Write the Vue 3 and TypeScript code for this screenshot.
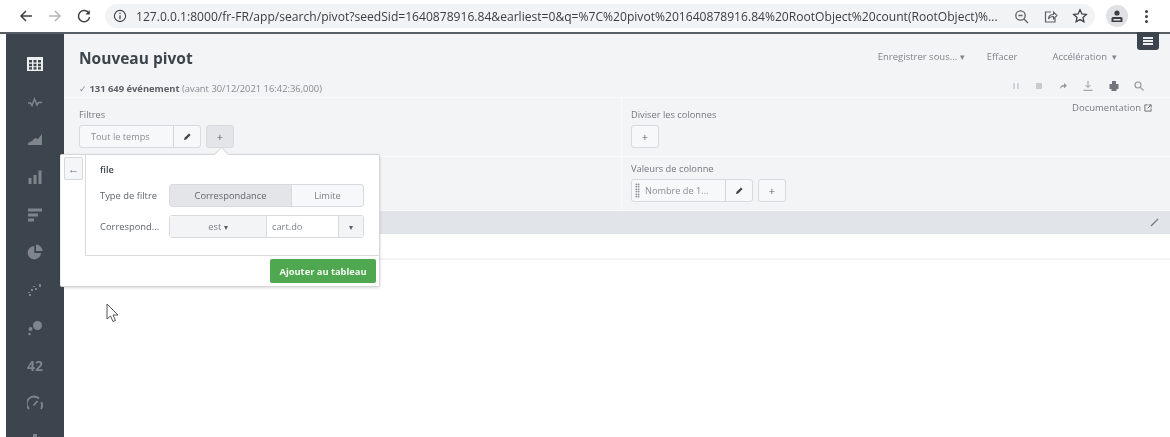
<template>
  <div class="page">
    <header class="browser">
      <svg class="nav" width="16" height="16" viewBox="0 0 16 16"><path d="M14 8H3M8 3L3 8l5 5" fill="none" stroke="#3c4043" stroke-width="1.5"/></svg>
      <svg class="nav" width="16" height="16" viewBox="0 0 16 16"><path d="M2 8h11M8 3l5 5-5 5" fill="none" stroke="#b4b7ba" stroke-width="1.5"/></svg>
      <svg class="nav" width="16" height="16" viewBox="0 0 16 16"><path d="M13 5.5A5.6 5.6 0 1 0 13.6 9" fill="none" stroke="#3c4043" stroke-width="1.5"/><path d="M13.8 2v4.4H9.4z" fill="#3c4043"/></svg>
      <div class="omnibox">
        <svg class="info" width="14" height="14" viewBox="0 0 14 14"><circle cx="7" cy="7" r="5.6" fill="none" stroke="#3c4043" stroke-width="1.1"/><path d="M7 6.2v4M7 3.8v1.2" stroke="#3c4043" stroke-width="1.2"/></svg>
        <span class="url">127.0.0.1:8000/fr-FR/app/search/pivot?seedSid=1640878916.84&amp;earliest=0&amp;q=%7C%20pivot%201640878916.84%20RootObject%20count(RootObject)%...</span>
        <svg class="omni-icon" width="15" height="15" viewBox="0 0 15 15"><circle cx="6.5" cy="6.5" r="4.7" fill="none" stroke="#5f6368" stroke-width="1.3"/><path d="M10 10l4 4M4.5 6.5h4" stroke="#5f6368" stroke-width="1.3"/></svg>
        <svg class="omni-icon" width="15" height="15" viewBox="0 0 15 15"><path d="M8 3H2.5v10h9.5V9" fill="none" stroke="#5f6368" stroke-width="1.2"/><path d="M5.5 10c0-3.500 2.500-4.500 5-4.500V3L14 6.500 10.500 10V7.500c-2 0-4 .5-5 2.500z" fill="none" stroke="#5f6368" stroke-width="1.1"/></svg>
        <svg class="omni-icon" width="16" height="16" viewBox="0 0 16 16"><path d="M8 1.800l1.900 4.100 4.400.5-3.300 3 .9 4.400L8 11.600l-3.900 2.200.9-4.400-3.300-3 4.400-.5z" fill="none" stroke="#3c4043" stroke-width="1.3"/></svg>
      </div>
      <div class="avatar">
        <svg width="14" height="14" viewBox="0 0 14 14"><circle cx="7" cy="4" r="2.6" fill="#3c4043"/><path d="M1.500 13V9.500c0-1 1-1.500 2-1.500h7c1 0 2 .5 2 1.500V13zM3.500 10v1.500h7V10z" fill="#3c4043" fill-rule="evenodd"/></svg>
      </div>
      <div class="kebab"><i></i><i></i><i></i></div>
    </header>

    <div class="body">
      <aside class="sidebar">
        <svg class="tool" width="16" height="16" viewBox="0 0 16 16"><path fill-rule="evenodd" d="M0 1h16v14H0zM2 4v2.500h3V4zm4.500 0v2.500h3V4zM11 4v2.500h3V4zM2 7.700v2.500h3V7.700zm4.500 0v2.500h3V7.700zm4.500 0v2.500h3V7.700zM2 11.300v2.200h3v-2.200zm4.500 0v2.200h3v-2.200zm4.500 0v2.200h3v-2.200z" fill="#eceef0"/></svg>
        <svg class="tool" width="16" height="16" viewBox="0 0 16 16"><path d="M1 9h2.500L5 11.500 7.500 5 10 11l1.500-2.500H15" fill="none" stroke="#80848b" stroke-width="1.5"/></svg>
        <svg class="tool" width="16" height="16" viewBox="0 0 16 16"><path d="M1 14v-2l4-2 3-3 3 1 4-5v11z" fill="#80848b"/></svg>
        <svg class="tool" width="16" height="16" viewBox="0 0 16 16"><path d="M1.500 9h3v6h-3zM6.500 6h3v9h-3zM11.500 1.500h3V15h-3z" fill="#80848b"/></svg>
        <svg class="tool" width="16" height="16" viewBox="0 0 16 16"><path d="M1 1.500h14v3H1zM1 6.500h10v3H1zM1 11.500h6v3H1z" fill="#80848b"/></svg>
        <svg class="tool" width="16" height="16" viewBox="0 0 16 16"><path d="M7.300 2a6.700 6.700 0 1 0 6.700 7H7.300z M9 .5V7h6.500A6.500 6.500 0 0 0 9 .5z" fill="#80848b"/></svg>
        <svg class="tool" width="16" height="16" viewBox="0 0 16 16"><path d="M2 14h2v-2H2zM4 9h2V7H4zM8 8h2V6H8zM6 5h2V4H6zM12 5h2V2h-2zM1 11h2v-1H1z" fill="#80848b"/></svg>
        <svg class="tool" width="16" height="16" viewBox="0 0 16 16"><circle cx="10.500" cy="5.500" r="4.500" fill="#80848b"/><circle cx="3.500" cy="9" r="2" fill="#80848b"/><circle cx="2.500" cy="14" r="1.300" fill="#80848b"/></svg>
        <span class="tool num">42</span>
        <svg class="tool" width="16" height="16" viewBox="0 0 16 16"><path d="M2 14A7 7 0 0 1 12 3.500M14.200 7a7 7 0 0 1-.2 7M6.500 10.500L10.500 6" fill="none" stroke="#80848b" stroke-width="1.8"/></svg>
        <svg class="tool" width="16" height="16" viewBox="0 0 16 16"><path d="M6 1h4v15H6z" fill="#80848b"/></svg>
      </aside>

      <main class="main">
        <section class="head">
          <div class="title-row">
            <h1>Nouveau pivot</h1>
            <div class="actions">
              <span class="a1">Enregistrer sous... <small>▾</small></span>
              <span class="a2">Effacer</span>
              <span class="a3">Accélération &nbsp;<small>▾</small></span>
            </div>
            <div class="menu-tab"><i></i><i></i><i></i></div>
          </div>
          <div class="status-row">
            <span class="status"><span class="check">✓</span> <b>131 649 événement</b> (avant 30/12/2021 16:42:36,000)</span>
            <div class="job-icons">
              <svg width="8" height="8" viewBox="0 0 8 8"><path d="M1 1h2v6H1zM5 1h2v6H5z" fill="#d0d3d7"/></svg>
              <svg width="8" height="8" viewBox="0 0 8 8"><path d="M1 1h6v6H1z" fill="#c8cbd0"/></svg>
              <svg width="9" height="9" viewBox="0 0 9 9"><path d="M1 8c0-3 2-4 4-4V2l3 2.700L5 7.300V5.500C3.500 5.500 2 6.300 1 8z" fill="#93979e"/></svg>
              <svg width="10" height="10" viewBox="0 0 10 10"><path d="M5 0v6M2.500 4L5 6.500 7.500 4M.5 9.300h9" fill="none" stroke="#93979e" stroke-width="1"/></svg>
              <svg width="10" height="10" viewBox="0 0 10 10"><path d="M3 0h4v3h2.500v5H7.500v2h-5V8H.5V3H3z" fill="#70747b"/></svg>
              <svg width="10" height="10" viewBox="0 0 10 10"><circle cx="4" cy="4" r="3" fill="none" stroke="#93979e" stroke-width="1.1"/><path d="M6.300 6.300L9.500 9.500" stroke="#93979e" stroke-width="1.1"/></svg>
            </div>
          </div>
        </section>

        <section class="grid-row first">
          <div class="cell left">
            <label>Filtres</label>
            <div class="controls">
              <div class="pill">
                <span class="pill-label time">Tout le temps</span>
                <span class="pill-edit"><svg width="9" height="9" viewBox="0 0 9 9"><path d="M1 8l.6-2.200L6 1.400 7.600 3 3.200 7.400z" fill="#3c444d"/></svg></span>
              </div>
              <button class="add active">+</button>
            </div>
          </div>
          <div class="cell right">
            <label>Diviser les colonnes</label>
            <div class="controls"><button class="add">+</button></div>
            <span class="doc">Documentation
              <svg width="8" height="8" viewBox="0 0 9 9"><path d="M4 1H1v7h7V5M5 1h3v3M8 1L4 5" fill="none" stroke="#5f656d" stroke-width="1"/></svg>
            </span>
          </div>
        </section>

        <section class="grid-row second">
          <div class="cell left"></div>
          <div class="cell right">
            <label>Valeurs de colonne</label>
            <div class="controls">
              <div class="pill">
                <span class="grip"></span>
                <span class="pill-label value">Nombre de 1...</span>
                <span class="pill-edit"><svg width="9" height="9" viewBox="0 0 9 9"><path d="M1 8l.6-2.200L6 1.400 7.600 3 3.200 7.400z" fill="#3c444d"/></svg></span>
              </div>
              <button class="add">+</button>
            </div>
          </div>
        </section>

        <div class="table-head">
          <svg width="9" height="9" viewBox="0 0 9 9"><path d="M1 8L8 1" stroke="#757a82" stroke-width="1.2"/></svg>
        </div>
        <div class="table-row"></div>
      </main>

      <div class="popover">
        <span class="caret"></span>
        <button class="back">←</button>
        <div class="pop-inner">
          <div class="pop-form">
            <div class="field-name">file</div>
            <div class="form-row">
              <span class="form-label">Type de filtre</span>
              <div class="seg">
                <span class="seg-a on">Correspondance</span>
                <span class="seg-b">Limite</span>
              </div>
            </div>
            <div class="form-row">
              <span class="form-label">Correspond...</span>
              <div class="seg">
                <span class="sel-a">est <small>▾</small></span>
                <span class="sel-b">cart.do</span>
                <span class="sel-c"><small>▾</small></span>
              </div>
            </div>
          </div>
          <div class="pop-foot"><button class="apply">Ajouter au tableau</button></div>
        </div>
      </div>

      <svg class="cursor" width="14" height="20" viewBox="0 0 14 20"><path d="M1 1v15l3.500-3 2.500 5.500 2.500-1-2.500-5.500h5z" fill="#fff" stroke="#555" stroke-width="1"/></svg>
    </div>
  </div>
</template>

<script setup lang="ts">
</script>

<style>
html, body { margin: 0; background: #fff; }
</style>

<style scoped>
.page { width: 1170px; height: 437px; overflow: hidden; font-family: "Open Sans", "Liberation Sans", sans-serif; color: #5c6773; background: #fff; filter: blur(0.35px); }
.browser { height: 32px; display: flex; align-items: center; box-sizing: border-box; padding: 0 0 0 18px; background: #fff; }
.nav { margin-right: 13px; flex: none; }
.omnibox { width: 990px; height: 24px; background: #f1f3f4; border-radius: 12px; display: flex; align-items: center; padding-left: 8px; flex: none; box-sizing: border-box; }
.info { flex: none; }
.url { margin-left: 9px; font-size: 12.1px; color: #3a3d41; white-space: nowrap; width: 867px; overflow: hidden; flex: none; }
.omni-icon { margin-left: 14px; flex: none; }
.url + .omni-icon { margin-left: 11px; }
.avatar { width: 22px; height: 22px; border-radius: 50%; background: #dfe1e5; margin-left: 11px; display: flex; align-items: center; justify-content: center; flex: none; }
.kebab { margin-left: 17px; display: flex; flex-direction: column; gap: 2px; }
.kebab i { width: 3px; height: 3px; background: #3c4043; border-radius: 50%; display: block; }

.body { position: relative; height: 405px; display: flex; padding-left: 6px; border-top: 2px solid #585e66; box-sizing: border-box; }
.sidebar { width: 58px; background: #3c444d; display: flex; flex-direction: column; align-items: center; flex: none; padding-top: 22px; gap: 21.7px; height: 430px; box-sizing: border-box; }
.tool { flex: none; height: 16px; }
.num { font-size: 14px; font-weight: 700; color: #80848b; line-height: 16px; }

.main { flex: 1; min-width: 0; background: #fff; }
.head { height: 64px; background: #f2f4f5; border-bottom: 1px solid #f8f9fa; box-sizing: border-box; }
.title-row { height: 46px; display: flex; align-items: flex-start; padding: 12px 0 0 15px; box-sizing: border-box; position: relative; }
h1 { margin: 0; font-size: 15.5px; line-height: 24px; font-weight: 700; color: #3c444d; }
.actions { margin-left: auto; display: flex; font-size: 9.5px; color: #80858c; padding-top: 4px; padding-right: 53px; }
.actions small { font-size: 9px; }
.a1 { margin-right: 22px; }
.a2 { margin-right: 35px; }
.menu-tab { position: absolute; right: 11px; top: -2px; width: 22px; height: 18px; background: #3c444d; border-radius: 0 0 3px 3px; display: flex; flex-direction: column; align-items: center; justify-content: center; gap: 1.5px; }
.menu-tab i { width: 10px; height: 1.5px; background: #eceef0; display: block; }
.status-row { display: flex; align-items: center; padding-left: 15px; height: 16px; justify-content: space-between; }
.status { font-size: 9.4px; color: #878c93; white-space: nowrap; }
.status b { color: #5c6066; font-weight: 700; }
.check { color: #868a91; }
.job-icons { display: flex; align-items: center; gap: 15.5px; padding-right: 26px; margin-bottom: 5px; }

.grid-row { display: flex; background: #f2f4f5; box-sizing: border-box; border-bottom: 1px solid #f9fafb; }
.first { height: 59px; }
.second { height: 54px; }
.cell { box-sizing: border-box; padding: 10px 0 0 15px; position: relative; }
.left { flex: none; width: 558px; border-right: 1px solid #f9fafb; }
.right { flex: 1; padding-left: 9px; }
.second .cell { padding-top: 5px; }
label { display: block; font-size: 9.3px; line-height: 13px; color: #73787f; }
.controls { display: flex; gap: 5px; margin-top: 4px; }
.pill { display: flex; height: 23px; border: 1px solid #d7dade; border-radius: 3px; box-sizing: border-box; background: #f7f8f9; align-items: stretch; }
.pill-label { font-size: 9.2px; color: #8a8f96; line-height: 21px; white-space: nowrap; }
.time { width: 93px; padding-left: 11px; box-sizing: border-box; }
.value { width: 85px; padding-left: 5px; box-sizing: border-box; }
.grip { width: 5px; height: 15px; align-self: center; margin-left: 3px; background-image: radial-gradient(#50555c 0.7px, transparent 0.9px); background-size: 2.5px 2.5px; }
.pill-edit { width: 27px; border-left: 1px solid #d3d6da; display: flex; align-items: center; justify-content: center; box-sizing: border-box; }
.add { width: 28px; height: 23px; border: 1px solid #d7dade; border-radius: 3px; background: #f7f8f9; font-size: 11px; color: #5f656d; padding: 0; font-family: "Open Sans", sans-serif; line-height: 19px; }
.add.active { background: #e3e5e9; }
.doc { position: absolute; top: 3px; right: 18px; font-size: 9.5px; color: #777c84; display: flex; align-items: center; gap: 3px; }
.table-head { height: 23px; background: #e1e4e8; display: flex; align-items: center; justify-content: flex-end; padding-right: 11px; box-sizing: border-box; }
.table-row { height: 24px; background: #fff; border-bottom: 2px solid #f2f4f5; }

.popover { position: absolute; left: 60px; top: 120px; width: 320px; height: 133px; background: #fff; border: 1px solid #d4d6da; border-left-color: #e9eaec; border-radius: 2px; box-shadow: 0 1px 3px rgba(60,68,77,.2); box-sizing: border-box; display: flex; }
.caret { position: absolute; left: 155px; top: -6px; width: 10px; height: 10px; background: #fff; transform: rotate(45deg); border-left: 1px solid #d4d6da; border-top: 1px solid #d4d6da; }
.back { position: absolute; left: 3px; top: 2px; width: 19px; height: 23px; border: 1px solid #d4d7db; border-radius: 2px; background: #f5f6f7; font-size: 11px; color: #5f656d; padding: 0; font-family: "Open Sans", sans-serif; }
.pop-inner { margin-left: 24px; flex: 1; display: flex; flex-direction: column; min-width: 0; position: relative; z-index: 1; }
.pop-form { height: 101px; border-left: 1px solid #d7dade; border-bottom: 1px solid #d7dade; padding: 9px 0 0 14px; box-sizing: border-box; }
.field-name { font-size: 9.2px; font-weight: 600; color: #3c444d; line-height: 12px; }
.form-row { display: flex; align-items: center; height: 23px; margin-top: 8px; }
.form-label { width: 69px; flex: none; font-size: 9.4px; color: #5f656d; white-space: nowrap; overflow: hidden; }
.seg { display: flex; width: 195px; height: 23px; border: 1px solid #d7dade; border-radius: 3px; box-sizing: border-box; font-size: 9.3px; color: #7c8189; background: #f7f8f9; line-height: 21px; text-align: center; }
.seg small { font-size: 8px; color: #5c6066; }
.seg-a { width: 122px; border-right: 1px solid #d7dade; box-sizing: border-box; }
.seg-a.on { background: #e3e5e9; color: #5f656d; }
.seg-b { flex: 1; }
.sel-a { width: 97px; background: #f2f4f5; border-right: 1px solid #d7dade; box-sizing: border-box; }
.sel-b { width: 71px; background: #fff; text-align: left; padding-left: 5px; box-sizing: border-box; }
.sel-c { flex: 1; border-left: 1px solid #d7dade; background: #f2f4f5; }
.pop-foot { display: flex; justify-content: flex-end; padding: 3px 3px 0 0; }
.apply { width: 106px; height: 24px; background: #4fa84f; border: 0; border-radius: 2px; color: #f4f8f4; font-size: 9.3px; font-weight: 700; font-family: "Open Sans", sans-serif; padding: 0; }
.cursor { position: absolute; left: 106px; top: 269px; }
</style>
